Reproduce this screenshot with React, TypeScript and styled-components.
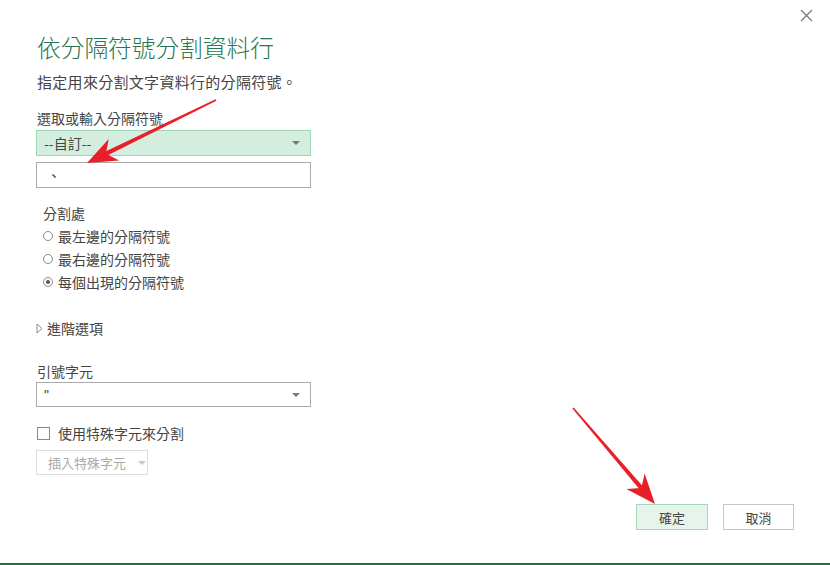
import React from 'react';
import styled, { createGlobalStyle } from 'styled-components';

const Global = createGlobalStyle`
  html, body {
    margin: 0;
    padding: 0;
    background: #fff;
  }
  body {
    font-family: 'Liberation Sans', 'Noto Sans CJK TC', sans-serif;
    color: #444;
  }
`;

const Dialog = styled.div`
  position: relative;
  width: 830px;
  height: 565px;
  box-sizing: border-box;
  border-bottom: 2px solid #217346;
  display: flex;
  flex-direction: column;
  padding: 0 36px;
  overflow: hidden;
`;

const TopBar = styled.div`
  height: 30px;
  display: flex;
  justify-content: flex-end;
  align-items: center;
  margin-right: -19px;
`;

const CloseBtn = styled.button`
  width: 14px;
  height: 14px;
  padding: 0;
  border: none;
  background: none;
  display: flex;
  align-items: center;
  justify-content: center;
`;

const Title = styled.h1`
  margin: 2px 0 0 1px;
  font-family: 'Noto Sans CJK TC', sans-serif;
  font-weight: 300;
  font-size: 23.7px;
  line-height: 30px;
  color: #2a7650;
`;

const Subtitle = styled.p`
  margin: 10px 0 0 1px;
  font-family: 'Noto Sans CJK TC', sans-serif;
  font-size: 15px;
  letter-spacing: 0.3px;
  line-height: 20px;
  color: #444;
`;

const Label = styled.div<{ $top: number; $indent?: number }>`
  margin-top: ${p => p.$top}px;
  margin-left: ${p => p.$indent ?? 1}px;
  font-family: 'Noto Sans CJK TC', sans-serif;
  font-size: 14px;
  line-height: 20px;
  color: #444;
`;

const Field = styled.div<{ $top: number; $green?: boolean; $h?: number }>`
  margin-top: ${p => p.$top}px;
  width: 275px;
  height: ${p => p.$h ?? 26}px;
  box-sizing: border-box;
  border: 1px solid ${p => (p.$green ? '#9fd6b4' : '#ababab')};
  background: ${p => (p.$green ? '#d3eede' : '#fff')};
  display: flex;
  align-items: center;
  justify-content: space-between;
  padding: 0 10px 0 7px;
  font-family: 'Noto Sans CJK TC', 'Liberation Sans', sans-serif;
  font-size: 14px;
  color: #444;
`;

const Caret = styled.span<{ $light?: boolean }>`
  width: 0;
  height: 0;
  border-left: 4px solid transparent;
  border-right: 4px solid transparent;
  border-top: 4px solid ${p => (p.$light ? '#c8c8c8' : '#777')};
`;

const RadioList = styled.div`
  margin-top: 1px;
  display: flex;
  flex-direction: column;
`;

const RadioRow = styled.label`
  height: 23px;
  display: flex;
  align-items: center;
  gap: 5px;
  padding-left: 7px;
  font-family: 'Noto Sans CJK TC', sans-serif;
  font-size: 14px;
  color: #444;
`;

const RadioDot = styled.span<{ $on?: boolean }>`
  width: 10px;
  height: 10px;
  box-sizing: border-box;
  border-radius: 50%;
  border: 1px solid #8a8a8a;
  background: #fff;
  display: flex;
  align-items: center;
  justify-content: center;
  &::after {
    content: '';
    width: 4px;
    height: 4px;
    border-radius: 50%;
    background: ${p => (p.$on ? '#555' : 'transparent')};
  }
`;

const Expander = styled.div`
  margin-top: 25px;
  display: flex;
  align-items: center;
  gap: 4px;
  height: 20px;
  font-family: 'Noto Sans CJK TC', sans-serif;
  font-size: 14px;
  color: #444;
`;

const CheckRow = styled.label`
  margin-top: 16px;
  height: 20px;
  display: flex;
  align-items: center;
  gap: 8px;
  margin-left: 1px;
  font-family: 'Noto Sans CJK TC', sans-serif;
  font-size: 14px;
  color: #444;
`;

const CheckBox = styled.span`
  width: 13px;
  height: 13px;
  box-sizing: border-box;
  border: 1px solid #8a8a8a;
  background: #fff;
`;

const GhostButton = styled.div`
  margin-top: 7px;
  width: 112px;
  height: 25px;
  box-sizing: border-box;
  border: 1px solid #dcdcdc;
  display: flex;
  align-items: center;
  gap: 12px;
  padding-left: 11px;
  font-family: 'Noto Sans CJK TC', sans-serif;
  font-size: 13px;
  color: #aaa;
`;

const Footer = styled.div`
  margin-top: 29px;
  display: flex;
  justify-content: flex-end;
  gap: 15px;
`;

const Button = styled.button<{ $primary?: boolean }>`
  width: ${p => (p.$primary ? 72 : 71)}px;
  height: 26px;
  box-sizing: border-box;
  border: 1px solid ${p => (p.$primary ? '#a3d7b6' : '#c6c6c6')};
  background: ${p => (p.$primary ? '#e6f4eb' : '#fff')};
  font-family: 'Noto Sans CJK TC', sans-serif;
  font-size: 13px;
  color: #444;
  padding: 0;
`;

const Overlay = styled.svg`
  position: absolute;
  left: 0;
  top: 0;
  pointer-events: none;
`;

type Pt = [number, number];

function arrowPoly(from: Pt, to: Pt, headLen = 30, headHalf = 12, notch = 21) {
  const dx = to[0] - from[0];
  const dy = to[1] - from[1];
  const len = Math.hypot(dx, dy);
  const ux = dx / len;
  const uy = dy / len;
  const nx = -uy;
  const ny = ux;
  const base: Pt = [to[0] - ux * headLen, to[1] - uy * headLen];
  const neck: Pt = [to[0] - ux * notch, to[1] - uy * notch];
  const head = [
    to,
    [base[0] + nx * headHalf, base[1] + ny * headHalf],
    neck,
    [base[0] - nx * headHalf, base[1] - ny * headHalf],
  ] as Pt[];
  const sw = 2.2;
  const shaft = [
    [from[0] + nx * 0.8, from[1] + ny * 0.8],
    [neck[0] + nx * sw, neck[1] + ny * sw],
    [neck[0] - nx * sw, neck[1] - ny * sw],
    [from[0] - nx * 0.8, from[1] - ny * 0.8],
  ] as Pt[];
  const s = (pts: Pt[]) => pts.map(p => `${p[0].toFixed(1)},${p[1].toFixed(1)}`).join(' ');
  return { head: s(head), shaft: s(shaft) };
}

const Arrow: React.FC<{ from: Pt; to: Pt }> = ({ from, to }) => {
  const a = arrowPoly(from, to);
  return (
    <g fill="#e81f28">
      <polygon points={a.shaft} />
      <polygon points={a.head} />
    </g>
  );
};

const App: React.FC = () => {
  return (
    <Dialog>
      <Global />
      <TopBar>
        <CloseBtn aria-label="close">
          <svg width="13" height="13" viewBox="0 0 13 13">
            <path d="M1 1 L12 12 M12 1 L1 12" stroke="#7a7a7a" strokeWidth="1.3" />
          </svg>
        </CloseBtn>
      </TopBar>
      <Title>依分隔符號分割資料行</Title>
      <Subtitle>指定用來分割文字資料行的分隔符號。</Subtitle>

      <Label $top={16}>選取或輸入分隔符號</Label>
      <Field $top={2} $green>
        <span>--自訂--</span>
        <Caret />
      </Field>
      <Field $top={6}>
        <span style={{ paddingLeft: 3 }}>、</span>
      </Field>

      <Label $top={15} $indent={7}>分割處</Label>
      <RadioList>
        <RadioRow><RadioDot />最左邊的分隔符號</RadioRow>
        <RadioRow><RadioDot />最右邊的分隔符號</RadioRow>
        <RadioRow><RadioDot $on />每個出現的分隔符號</RadioRow>
      </RadioList>

      <Expander>
        <svg width="7" height="11" viewBox="0 0 7 11">
          <path d="M1 1 L6 5.5 L1 10 Z" fill="none" stroke="#8a8a8a" strokeWidth="1" />
        </svg>
        進階選項
      </Expander>

      <Label $top={23}>引號字元</Label>
      <Field $top={1} $h={25}>
        <span style={{ fontFamily: "'Liberation Sans', sans-serif", color: '#553355' }}>"</span>
        <Caret />
      </Field>

      <CheckRow>
        <CheckBox />
        使用特殊字元來分割
      </CheckRow>
      <GhostButton>
        插入特殊字元
        <Caret $light />
      </GhostButton>

      <Footer>
        <Button $primary>確定</Button>
        <Button>取消</Button>
      </Footer>

      <Overlay width="830" height="565" viewBox="0 0 830 565">
        <Arrow from={[216, 100]} to={[87, 163]} />
        <Arrow from={[573, 408]} to={[655, 504]} />
      </Overlay>
    </Dialog>
  );
};

export default App;
